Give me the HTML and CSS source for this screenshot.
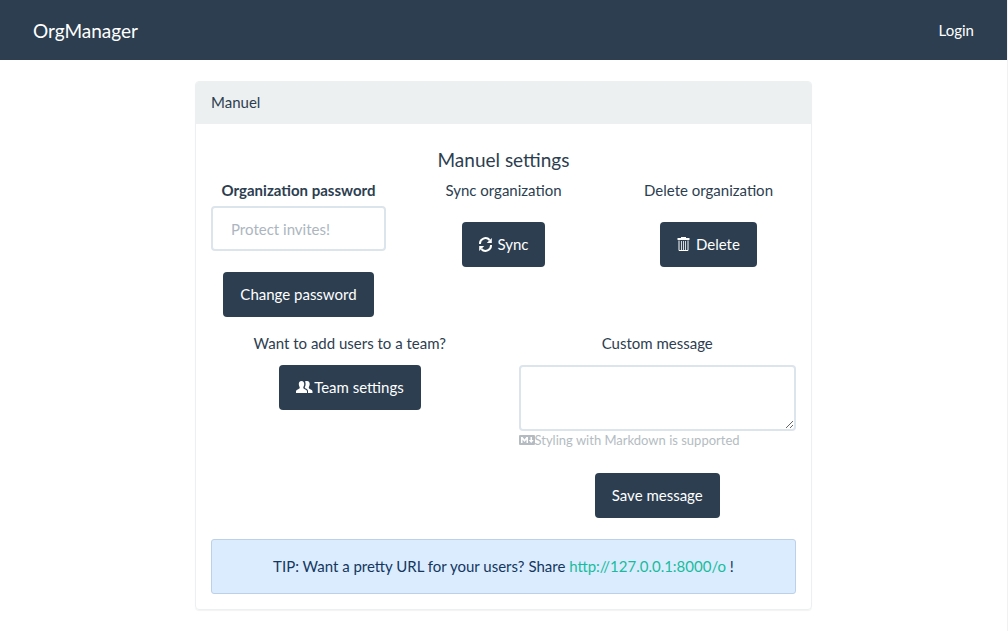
FILE: index.html
```html
<!DOCTYPE html>
<html lang="en">
<head>
<meta charset="utf-8">
<meta name="viewport" content="width=device-width, initial-scale=1">
<title>OrgManager</title>
<link rel="stylesheet" href="styles.css">
</head>
<body>
<nav class="navbar">
  <a class="brand" href="#">OrgManager</a>
  <a class="nav-link" href="#">Login</a>
</nav>
<main class="panel">
  <div class="panel-heading">Manuel</div>
  <div class="panel-body">
    <h4 class="title">Manuel settings</h4>
    <div class="row thirds">
      <form class="cell">
        <label class="strong" for="password">Organization password</label>
        <input class="control" id="password" type="password" placeholder="Protect invites!">
        <button class="btn spaced" type="button">Change password</button>
      </form>
      <div class="cell">
        <p class="caption">Sync organization</p>
        <button class="btn spaced" type="button">
          <svg class="icon" viewBox="0 0 15 15" aria-hidden="true"><path d="M1 7A5.500 5.500 0 0 1 10.600 3M12 8A5.500 5.500 0 0 1 2.400 12" fill="none" stroke="currentColor" stroke-width="2"/><path d="M12.800 1v5H7.800zM.2 14V9h5z" fill="currentColor"/></svg>
          Sync
        </button>
      </div>
      <div class="cell">
        <p class="caption">Delete organization</p>
        <button class="btn spaced" type="button">
          <svg class="icon" viewBox="0 0 15 15" aria-hidden="true"><path d="M4 0h5v1h3.500v2H.5V1H4z" fill="currentColor"/><path d="M2 3.500V13.500H11V3.500" fill="none" stroke="currentColor"/><path d="M4.500 4v9M6.500 4v9M8.500 4v9" fill="none" stroke="currentColor" stroke-opacity=".8"/></svg>
          Delete
        </button>
      </div>
    </div>
    <div class="row halves">
      <div class="cell">
        <p class="caption">Want to add users to a team?</p>
        <button class="btn team" type="button">
          <svg class="icon wide" viewBox="0 0 17 15" aria-hidden="true"><path d="M5.500 1C7.500 1 8.300 2.300 8.200 4.200 8.100 5.800 7.500 6.600 7.300 7.200c-.1 1 .3 1.500 1.500 2 1.600.7 2.200 1 2.200 2.300V13H0v-1.500c0-1.300.7-1.700 2.200-2.300 1.200-.5 1.600-1 1.500-2-.2-.6-.8-1.400-.9-3C2.700 2.300 3.500 1 5.500 1z" fill="currentColor"/><path d="M9 1.500C9.600 1.100 10.300 1 11 1c2 0 2.800 1.300 2.700 3.200-.1 1.600-.7 2.400-.9 3-.1 1 .3 1.500 1.500 2 1.500.6 2.200 1 2.200 2.300V13H12v-2c0-1.200-.9-2-2.800-2.800-.5-.3-.5-.7-.3-1.100.4-.7.700-1.700.7-3 0-1-.1-1.800-.6-2.600z" fill="currentColor"/></svg>
          Team settings
        </button>
      </div>
      <form class="cell">
        <label for="message">Custom message</label>
        <textarea class="control message" id="message"></textarea>
        <small class="help"><svg class="markdown" viewBox="0 0 16 10" aria-hidden="true"><rect width="16" height="10" rx="1" fill="currentColor"/><path d="M2 8V2h1.600L5.500 4.500 7.400 2H9v6H7.500V4.500L5.500 7 3.500 4.500V8zM11.500 2H13v3h1.700L12.200 8 9.800 5h1.700z" fill="#fff"/></svg>Styling with Markdown is supported</small>
        <button class="btn spaced" type="button">Save message</button>
      </form>
    </div>
    <div class="alert">TIP: Want a pretty URL for your users? Share <a href="#">http://127.0.0.1:8000/o</a> !</div>
  </div>
</main>
</body>
</html>
```
FILE: styles.css
```css
* {
  box-sizing: border-box;
}

body {
  margin: 0;
  min-height: 100vh;
  border-right: 1px solid #f1f1f1;
  background: #fff;
  color: #2c3e50;
  font: 15px/21px Lato, "Liberation Sans", sans-serif;
}

.navbar {
  display: flex;
  align-items: center;
  justify-content: space-between;
  height: 60px;
  margin-bottom: 21px;
  padding: 0 33px;
  background: #2c3e50;
}

.navbar a {
  color: #fff;
  text-decoration: none;
}

.navbar .brand {
  font-size: 19px;
}

.panel {
  width: 100%;
  max-width: 617px;
  margin: 0 auto 20px;
  border: 1px solid #ecf0f1;
  border-radius: 4px;
  box-shadow: 0 1px 1px rgba(0, 0, 0, 0.05);
}

.panel-heading {
  padding: 10px 15px 11px;
  border-radius: 3px 3px 0 0;
  background: #ecf0f1;
}

.panel-body {
  padding: 25px 15px 15px;
}

.title {
  margin: 0 0 10px;
  font-size: 19px;
  font-weight: 400;
  line-height: 21px;
  text-align: center;
}

.row {
  display: grid;
  column-gap: 30px;
}

.thirds {
  grid-template-columns: repeat(3, 1fr);
  margin-bottom: 16px;
}

.halves {
  grid-template-columns: repeat(2, 1fr);
  margin-bottom: 21px;
}

.cell {
  display: flex;
  flex-direction: column;
  align-items: center;
}

.caption {
  margin: 0;
}

.strong {
  margin-bottom: 5px;
  font-weight: 700;
}

.control {
  width: 100%;
  height: 45px;
  padding: 10px 18px;
  border: 2px solid #dce4ec;
  border-radius: 4px;
  background: #fff;
  color: #2c3e50;
  font: inherit;
}

.control::placeholder {
  color: #acb6c0;
  opacity: 1;
}

.message {
  height: 66px;
  margin-top: 11px;
  resize: vertical;
}

.btn {
  height: 45px;
  padding: 0 17px;
  border: 0;
  border-radius: 4px;
  background: #2c3e50;
  color: #fff;
  font: inherit;
  white-space: nowrap;
}

.spaced {
  margin-top: 21px;
}

.team {
  margin-top: 11px;
}

.icon {
  width: 15px;
  height: 15px;
  vertical-align: -2px;
}

.wide {
  width: 17px;
}

.team .icon {
  margin-right: -2px;
}

.help {
  align-self: flex-start;
  margin-bottom: 2px;
  color: #b4bcc2;
  font-size: 13px;
  line-height: 19px;
}

.markdown {
  width: 16px;
  height: 10px;
}

.alert {
  padding: 16px;
  border: 1px solid #bcd0e8;
  border-radius: 3px;
  background: #dbecff;
  color: #14375e;
  text-align: center;
}

.alert a {
  color: #18bc9c;
  text-decoration: none;
}
```
